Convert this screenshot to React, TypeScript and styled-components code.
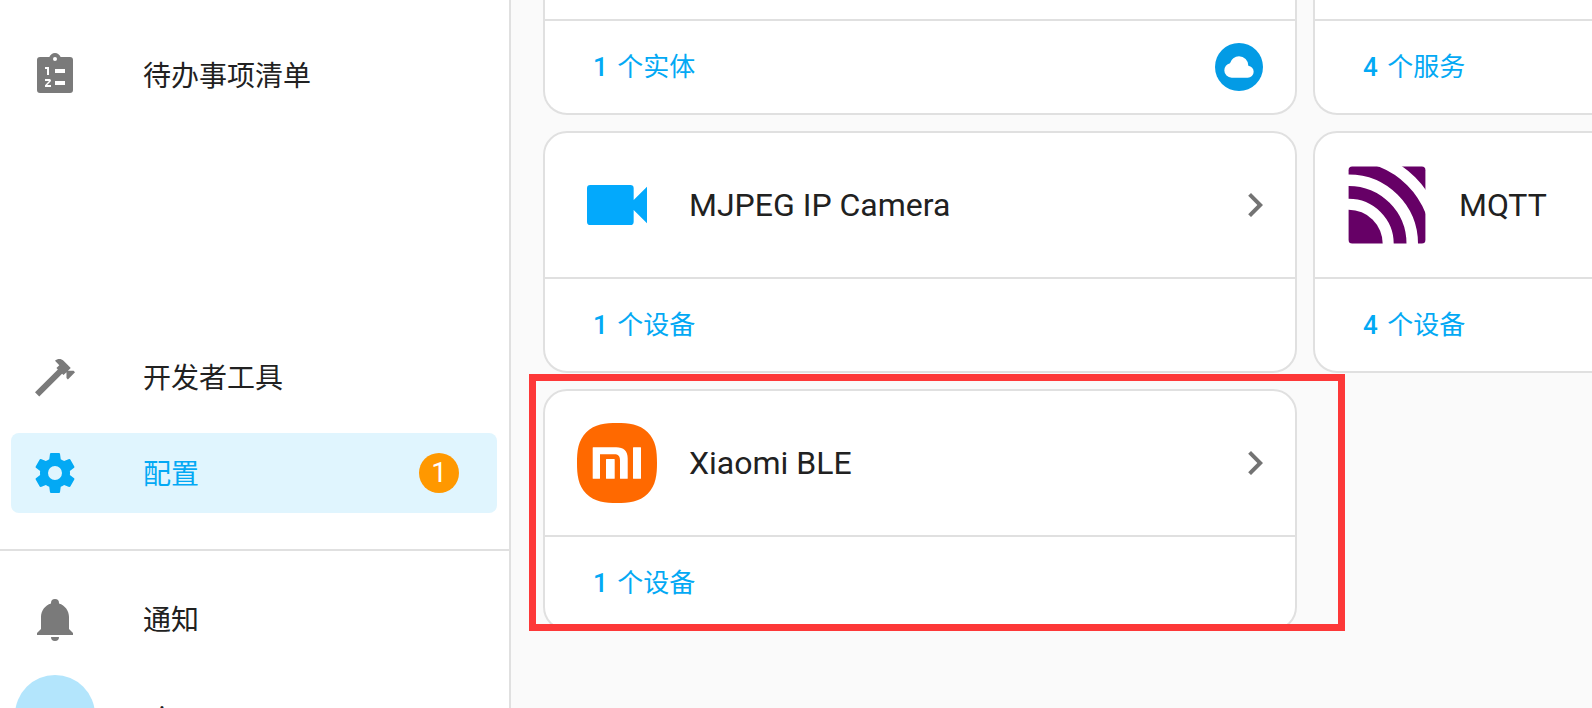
import React from "react";
import styled, { createGlobalStyle } from "styled-components";

const GlobalStyle = createGlobalStyle`
  *, *::before, *::after { box-sizing: border-box; }
  body {
    margin: 0;
    background: #fafafa;
    color: #212121;
    font-family: Roboto, "Noto Sans CJK SC", sans-serif;
    font-size: 28px;
    line-height: 40px;
  }
`;

const Page = styled.div`
  display: flex;
  height: 100vh;
  overflow: hidden;
`;

const Sidebar = styled.nav`
  flex: 0 0 511px;
  display: flex;
  flex-direction: column;
  padding-top: 35px;
  background: #fff;
  border-right: 2px solid #e0e0e0;
`;

const NavGroup = styled.div`
  display: flex;
  flex-direction: column;
  gap: 16px;
  padding: 0 12px 0 11px;
`;

const NavSpacer = styled.div`
  flex: 0 0 222px;
`;

const Divider = styled.hr`
  flex: none;
  width: 100%;
  height: 2px;
  margin: 36px 0 28px;
  border: 0;
  background: #e0e0e0;
`;

const NavItem = styled.a<{ $active?: boolean }>`
  display: flex;
  align-items: center;
  height: 80px;
  padding: 0 38px 0 4px;
  border-radius: 8px;
  text-decoration: none;
  color: ${(p) => (p.$active ? "#03a9f4" : "#212121")};
  background: ${(p) => (p.$active ? "#e0f5fe" : "transparent")};
`;

const NavIcon = styled.span<{ $active?: boolean }>`
  display: flex;
  justify-content: center;
  width: 80px;
  margin-right: 48px;
  color: ${(p) => (p.$active ? "#03a9f4" : "#7a7a7a")};
`;

const NavLabel = styled.span`
  flex: 1;
  padding-top: 4px;
`;

const Badge = styled.span`
  width: 40px;
  height: 40px;
  border-radius: 50%;
  background: #ff9800;
  color: #fff;
  text-align: center;
`;

const Avatar = styled.span`
  width: 80px;
  height: 80px;
  border-radius: 50%;
  background: #b3e5fc;
`;

const Main = styled.main`
  flex: 1;
  min-width: 0;
  padding-left: 32px;
  overflow: hidden;
`;

const CardGrid = styled.div`
  display: grid;
  grid-template-columns: repeat(2, minmax(754px, 1fr));
  gap: 16px;
`;

const Card = styled.article<{ $continued?: boolean }>`
  background: #fff;
  border: 2px solid #e0e0e0;
  border-top-width: ${(p) => (p.$continued ? "0" : "2px")};
  border-radius: ${(p) => (p.$continued ? "0 0 24px 24px" : "24px")};
`;

const CardTail = styled.div`
  height: 19px;
`;

const CardHeader = styled.a`
  display: flex;
  align-items: center;
  gap: 32px;
  height: 144px;
  padding: 0 16px 0 32px;
  color: #212121;
  text-decoration: none;
`;

const CardTitle = styled.h2`
  flex: 1;
  margin: 0;
  font-size: 32px;
  font-weight: 400;
  line-height: 48px;
`;

const CardActions = styled.div`
  display: flex;
  align-items: center;
  justify-content: space-between;
  height: 94px;
  padding: 0 32px;
  border-top: 2px solid #e0e0e0;
`;

const LinkButton = styled.button`
  height: 72px;
  padding: 0 16px 6px;
  border: 0;
  background: none;
  color: #03a9f4;
  font-family: inherit;
  font-size: 26px;
  font-weight: 500;
  cursor: pointer;
`;

const ButtonText = styled.span`
  margin-left: 3px;
  font-weight: 400;
`;

const CloudBadge = styled.span`
  display: flex;
  align-items: center;
  justify-content: center;
  width: 48px;
  height: 48px;
  border-radius: 50%;
  background: #039be5;
  color: #fff;
`;

const Highlighted = styled.div`
  position: relative;
`;

const HighlightFrame = styled.div`
  position: absolute;
  inset: -15px -48px 0 -14px;
  border: 7px solid #fd3838;
  pointer-events: none;
`;

const Chevron = styled.span`
  display: flex;
  color: #737373;
`;

const paths = {
  todo: "M19.5,3H14.82C14.4,1.84 13.3,1 12,1C10.7,1 9.6,1.84 9.18,3H4.5A1.5,1.5 0 0,0 3,4.5V19.5A1.5,1.5 0 0,0 4.5,21H19.5A1.5,1.5 0 0,0 21,19.5V4.5A1.5,1.5 0 0,0 19.5,3M12,3A1,1 0 0,1 13,4A1,1 0 0,1 12,5A1,1 0 0,1 11,4A1,1 0 0,1 12,3M7,8H9V12H8V9H7V8M10,17V18H7V17.08L9,15H7V14H9.25A0.75,0.75 0 0,1 10,14.75C10,14.95 9.92,15.14 9.79,15.27L8.12,17H10M12,9H17V11H12V9M12,15H17V17H12V15Z",
  hammer: "M2,19.63L13.43,8.2L12.72,7.5L14.14,6.07L12,3.89C13.2,2.7 15.09,2.7 16.27,3.89L19.87,7.5L18.45,8.91H21.29L22,9.62L18.45,13.21L17.74,12.5V9.62L16.27,11.04L15.56,10.33L4.13,21.76L2,19.63Z",
  cog: "M12,15.5A3.5,3.5 0 0,1 8.5,12A3.5,3.5 0 0,1 12,8.5A3.5,3.5 0 0,1 15.5,12A3.5,3.5 0 0,1 12,15.5M19.43,12.97C19.47,12.65 19.5,12.33 19.5,12C19.5,11.67 19.47,11.34 19.43,11L21.54,9.37C21.73,9.22 21.78,8.95 21.66,8.73L19.66,5.27C19.54,5.05 19.27,4.96 19.05,5.05L16.56,6.05C16.04,5.66 15.5,5.32 14.87,5.07L14.5,2.42C14.46,2.18 14.25,2 14,2H10C9.75,2 9.54,2.18 9.5,2.42L9.13,5.07C8.5,5.32 7.96,5.66 7.44,6.05L4.95,5.05C4.73,4.96 4.46,5.05 4.34,5.27L2.34,8.73C2.21,8.95 2.27,9.22 2.46,9.37L4.57,11C4.53,11.34 4.5,11.67 4.5,12C4.5,12.33 4.53,12.65 4.57,12.97L2.46,14.63C2.27,14.78 2.21,15.05 2.34,15.27L4.34,18.73C4.46,18.95 4.73,19.03 4.95,18.95L7.44,17.94C7.96,18.34 8.5,18.68 9.13,18.93L9.5,21.58C9.54,21.82 9.75,22 10,22H14C14.25,22 14.46,21.82 14.5,21.58L14.87,18.93C15.5,18.67 16.04,18.34 16.56,17.94L19.05,18.95C19.27,19.03 19.54,18.95 19.66,18.73L21.66,15.27C21.78,15.05 21.73,14.78 21.54,14.63L19.43,12.97Z",
  bell: "M21,19V20H3V19L5,17V11C5,7.9 7.03,5.17 10,4.29C10,4.19 10,4.1 10,4A2,2 0 0,1 12,2A2,2 0 0,1 14,4C14,4.1 14,4.19 14,4.29C16.97,5.17 19,7.9 19,11V17L21,19M14,21A2,2 0 0,1 12,23A2,2 0 0,1 10,21",
  video: "M17,10.5V7A1,1 0 0,0 16,6H4A1,1 0 0,0 3,7V17A1,1 0 0,0 4,18H16A1,1 0 0,0 17,17V13.5L21,17.5V6.5L17,10.5Z",
  chevron: "M8.59,16.58L13.17,12L8.59,7.41L10,6L16,12L10,18L8.59,16.58Z",
  cloud: "M6.5 20Q4.22 20 2.61 18.43 1 16.85 1 14.58 1 12.63 2.17 11.1 3.35 9.57 5.25 9.15 5.88 6.85 7.75 5.43 9.63 4 12 4 14.93 4 16.96 6.04 19 8.07 19 11 20.73 11.2 21.86 12.5 23 13.78 23 15.5 23 17.38 21.69 18.69 20.38 20 18.5 20Z",
};

const Icon = ({ name, size = 48 }: { name: keyof typeof paths; size?: number }) => (
  <svg width={size} height={size} viewBox="0 0 24 24" fill="currentColor" aria-hidden="true">
    <path fillRule="evenodd" d={paths[name]} />
  </svg>
);

const CameraLogo = styled.span`
  display: flex;
  color: #03a9fc;
`;

const MqttLogo = () => (
  <svg width="80" height="80" viewBox="0 0 80 80" aria-hidden="true">
    <clipPath id="mqtt-tile">
      <rect x="1.6" y="1.6" width="76.8" height="77" rx="3.6" />
    </clipPath>
    <g clipPath="url(#mqtt-tile)" fill="none" stroke="#660066">
      <circle cx="1.7" cy="78.7" r="34" fill="#660066" stroke="none" />
      <circle cx="1.7" cy="78.7" r="51.4" strokeWidth="12.8" />
      <circle cx="1.7" cy="78.7" r="76" strokeWidth="13.4" />
      <circle cx="1.7" cy="78.7" r="104" strokeWidth="20" />
    </g>
  </svg>
);

const XiaomiLogo = () => (
  <svg width="80" height="80" viewBox="0 0 80 80" aria-hidden="true">
    <path
      fill="#ff6900"
      d="M40 0C28.4 0 17.6 1 9.3 9.3C1 17.6 0 28.4 0 40C0 51.6 1 62.4 9.3 70.7C17.6 79 28.4 80 40 80C51.6 80 62.4 79 70.7 70.7C79 62.4 80 51.6 80 40C80 28.4 79 17.6 70.7 9.3C62.4 1 51.6 0 40 0Z"
    />
    <path
      fill="#fff"
      d="M16.2 24.3H39.2C46.6 24.3 50.7 28 50.7 35.4V55.2Q50.7 55.7 50.2 55.7H43.5Q43 55.7 43 55.2V37.2C43 33 41.2 31.3 37.2 31.3H23V55.2Q23 55.7 22.5 55.7H16.2Q15.7 55.7 15.7 55.2V24.8Q15.7 24.3 16.2 24.3ZM29.5 36H37.2Q37.7 36 37.7 36.5V55.2Q37.7 55.7 37.2 55.7H29.5Q29 55.7 29 55.2V36.5Q29 36 29.5 36ZM56.5 24.3H63.5Q64 24.3 64 24.8V55.2Q64 55.7 63.5 55.7H56.5Q56 55.7 56 55.2V24.8Q56 24.3 56.5 24.3Z"
    />
  </svg>
);

const CountButton = ({ count, label }: { count: number; label: string }) => (
  <LinkButton type="button">
    {count} <ButtonText>{label}</ButtonText>
  </LinkButton>
);

const IntegrationCard = ({ logo, title, count }: { logo: React.ReactNode; title: string; count: number }) => (
  <Card>
    <CardHeader href="#">
      {logo}
      <CardTitle>{title}</CardTitle>
      <Chevron><Icon name="chevron" /></Chevron>
    </CardHeader>
    <CardActions>
      <CountButton count={count} label="个设备" />
    </CardActions>
  </Card>
);

export default function App() {
  return (
    <>
      <GlobalStyle />
      <Page>
        <Sidebar>
          <NavGroup>
            <NavItem href="#">
              <NavIcon><Icon name="todo" /></NavIcon>
              <NavLabel>待办事项清单</NavLabel>
            </NavItem>
          </NavGroup>
          <NavSpacer />
          <NavGroup>
            <NavItem href="#">
              <NavIcon><Icon name="hammer" /></NavIcon>
              <NavLabel>开发者工具</NavLabel>
            </NavItem>
            <NavItem href="#" $active aria-current="page">
              <NavIcon $active><Icon name="cog" /></NavIcon>
              <NavLabel>配置</NavLabel>
              <Badge>1</Badge>
            </NavItem>
          </NavGroup>
          <Divider />
          <NavGroup>
            <NavItem href="#">
              <NavIcon><Icon name="bell" /></NavIcon>
              <NavLabel>通知</NavLabel>
            </NavItem>
            <NavItem href="#">
              <NavIcon><Avatar /></NavIcon>
              <NavLabel>ni</NavLabel>
            </NavItem>
          </NavGroup>
        </Sidebar>
        <Main>
          <CardGrid>
            <Card $continued>
              <CardTail />
              <CardActions>
                <CountButton count={1} label="个实体" />
                <CloudBadge><Icon name="cloud" size={32} /></CloudBadge>
              </CardActions>
            </Card>
            <Card $continued>
              <CardTail />
              <CardActions>
                <CountButton count={4} label="个服务" />
              </CardActions>
            </Card>
            <IntegrationCard
              logo={<CameraLogo><Icon name="video" size={80} /></CameraLogo>}
              title="MJPEG IP Camera"
              count={1}
            />
            <IntegrationCard logo={<MqttLogo />} title="MQTT" count={4} />
            <Highlighted>
              <IntegrationCard logo={<XiaomiLogo />} title="Xiaomi BLE" count={1} />
              <HighlightFrame />
            </Highlighted>
          </CardGrid>
        </Main>
      </Page>
    </>
  );
}
